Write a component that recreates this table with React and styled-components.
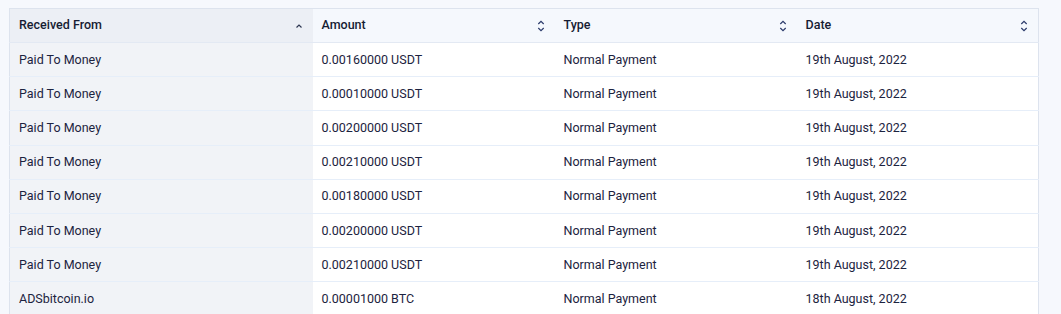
import styled, { createGlobalStyle } from "styled-components";

const rows = [
  ["Paid To Money", "0.00160000 USDT", "Normal Payment", "19th August, 2022"],
  ["Paid To Money", "0.00010000 USDT", "Normal Payment", "19th August, 2022"],
  ["Paid To Money", "0.00200000 USDT", "Normal Payment", "19th August, 2022"],
  ["Paid To Money", "0.00210000 USDT", "Normal Payment", "19th August, 2022"],
  ["Paid To Money", "0.00180000 USDT", "Normal Payment", "19th August, 2022"],
  ["Paid To Money", "0.00200000 USDT", "Normal Payment", "19th August, 2022"],
  ["Paid To Money", "0.00210000 USDT", "Normal Payment", "19th August, 2022"],
  ["ADSbitcoin.io", "0.00001000 BTC", "Normal Payment", "18th August, 2022"],
];

const columns = [
  { label: "Received From", width: 303, active: true },
  { label: "Amount", width: 242 },
  { label: "Type", width: 242 },
  { label: "Date", width: 242 },
];

const SortIcon = ({ active }) =>
  active ? (
    <svg width="8" height="8" viewBox="0 0 8 8">
      <path d="M1.5 5.5 L4 3 L6.5 5.5" fill="none" stroke="#2c3550" strokeWidth="1.2" />
    </svg>
  ) : (
    <svg width="8" height="14" viewBox="0 0 8 14">
      <path d="M1.3 5 L4 2.3 L6.7 5" fill="none" stroke="#2b3a6b" strokeWidth="1.2" />
      <path d="M1.3 9 L4 11.7 L6.7 9" fill="none" stroke="#2b3a6b" strokeWidth="1.2" />
    </svg>
  );

export default function App() {
  return (
    <>
      <GlobalStyle />
      <Page>
        <Table>
          <colgroup>
            {columns.map((c) => (
              <col key={c.label} style={{ width: c.width }} />
            ))}
          </colgroup>
          <thead>
            <tr>
              {columns.map((c) => (
                <Th key={c.label} $active={c.active}>
                  <HeadInner>
                    <span>{c.label}</span>
                    <SortIcon active={c.active} />
                  </HeadInner>
                </Th>
              ))}
            </tr>
          </thead>
          <tbody>
            {rows.map((r, i) => (
              <tr key={i}>
                {r.map((cell, j) => (
                  <Td key={j} $active={j === 0}>
                    {cell}
                  </Td>
                ))}
              </tr>
            ))}
          </tbody>
        </Table>
      </Page>
    </>
  );
}

const GlobalStyle = createGlobalStyle`
  body {
    margin: 0;
    background: #f6f8fd;
    font-family: Roboto, "Liberation Sans", sans-serif;
  }
`;

const Page = styled.div`
  padding: 8px 0 0 9px;
  height: 314px;
  box-sizing: border-box;
  overflow: hidden;
`;

const Table = styled.table`
  width: 1030px;
  border-collapse: collapse;
  table-layout: fixed;
  border: 1px solid #dde3ee;
  background: #fff;
`;

const Th = styled.th`
  height: 31px;
  padding: 0 10px 2px 9px;
  text-align: left;
  font-size: 12.5px;
  font-weight: 500;
  color: #161c33;
  background: ${(p) => (p.$active ? "#eceff5" : "#f5f8fd")};
  border-bottom: 1px solid #e3e9f3;
`;

const HeadInner = styled.div`
  display: flex;
  align-items: center;
  justify-content: space-between;

  svg {
    margin-top: 2px;
  }
`;

const Td = styled.td`
  height: 32.2px;
  padding: 0 10px 1px 9px;
  font-size: 12.5px;
  color: #1c2340;
  background: ${(p) => (p.$active ? "#f1f3f7" : "#fff")};
  border-bottom: 1px solid #e6eef9;
`;
